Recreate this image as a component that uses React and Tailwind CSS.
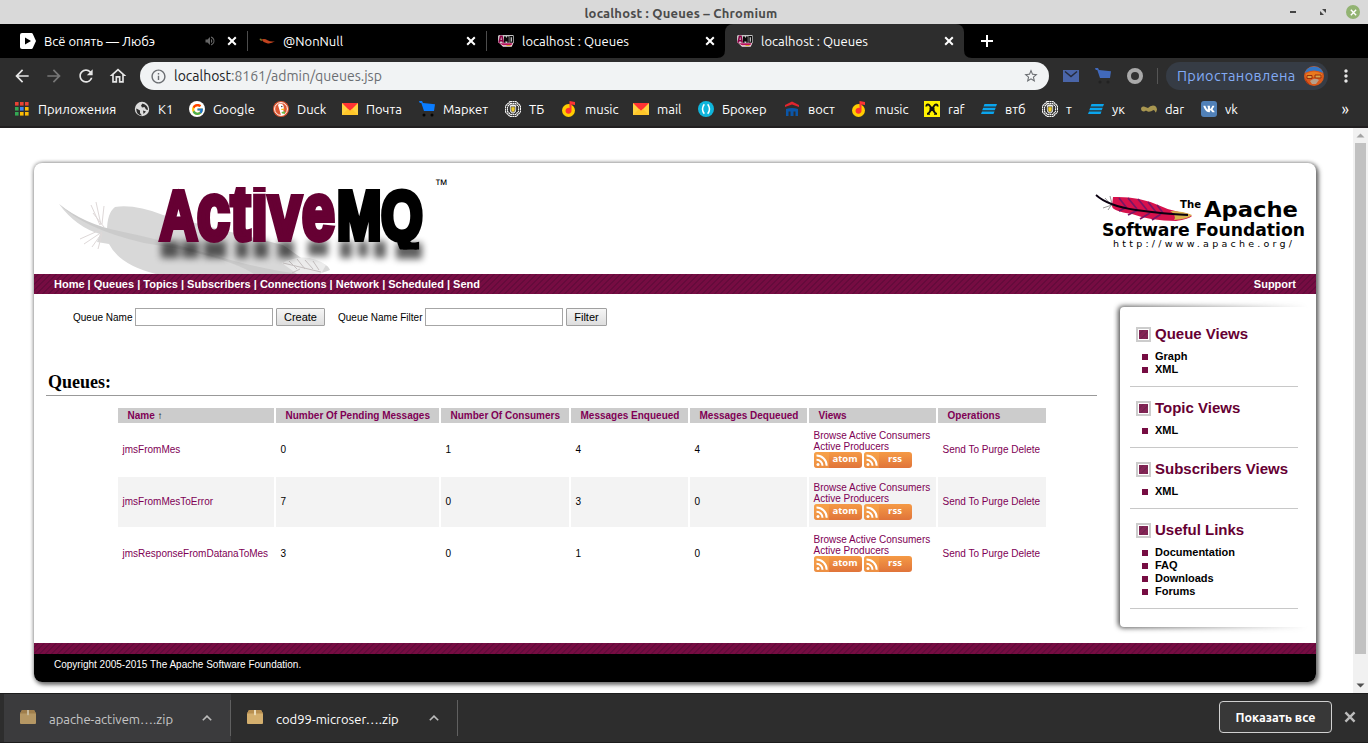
import React from "react";
import {
  MdArrowBack, MdArrowForward, MdRefresh, MdOutlineHome, MdInfoOutline, MdStarBorder,
  MdVolumeUp, MdMoreVert,
} from "react-icons/md";
import { FcGoogle } from "react-icons/fc";
import { FaVk } from "react-icons/fa";

const stripes =
  "bg-[repeating-linear-gradient(135deg,#760c42_0px,#760c42_2.2px,#5c0a38_3.1px,#760c42_4.243px)]";

function Cross({ className = "size-2.5" }) {
  return (
    <svg viewBox="0 0 10 10" className={className} fill="none" stroke="currentColor" strokeWidth="2">
      <path d="M1.2 1.2 8.8 8.8M8.8 1.2 1.2 8.8" />
    </svg>
  );
}

function AmqIcon() {
  return (
    <svg viewBox="0 0 16 16" className="size-4">
      <path d="M1 2h14l1 1v7H0V3z" fill="#c4c4c4" />
      <path d="M1 10 2.500 3.200h1.500L5.300 10M2 7.800h2.700" stroke="#8b0045" strokeWidth="1.600" fill="none" />
      <path d="M6.800 10V3.500l1.600 3.500L10 3.500V10" stroke="#0a0a0a" strokeWidth="1.600" fill="none" />
      <path d="M12 3.600h2.600v5.900H12zM13.500 9l1.700 1.500" stroke="#0a0a0a" strokeWidth="1.300" fill="none" />
      <path d="M1 9.800h14.500l-1.800 4H5z" fill="#f6e3e9" />
      <path d="M1.500 10.200h13l-1.200 2H5z" fill="#b5105a" />
      <path d="M9 12h4l-1 1H8z" fill="#e0a030" />
    </svg>
  );
}

function PlayTab() {
  return (
    <svg viewBox="0 0 16 16" className="size-4">
      <path d="M2 0h9.500q.8 0 1.200.8L16 8l-3.300 7.200q-.4.800-1.200.8H2q-2 0-2-2V2q0-2 2-2z" fill="#fff" />
      <path d="M5 4.500 11 8l-6 3.500z" fill="#000" />
    </svg>
  );
}

function Chili() {
  return (
    <svg viewBox="0 0 16 16" className="size-4">
      <path d="M2.500 6.500q3-1.500 6 .8 3 1.700 7.500 1-4 2.700-8 1.900Q4 9.500 2.500 6.500z" fill="#c2431f" />
      <path d="M.3 6 2 5.600l1.200 1.300-1 1.400z" fill="#7f7a2a" />
    </svg>
  );
}

function Tab({ icon, title, sound, active, divider }) {
  return (
    <div className={"relative flex h-full w-[239px] shrink-0 items-center pl-3 " + (active ? "rounded-t-lg bg-[#2d2d2d]" : "")}>
      {active && (
        <>
          <svg viewBox="0 0 8 8" className="absolute bottom-0 -left-2 size-2" fill="#2d2d2d"><path d="M8 0v8H0q8 0 8-8z" /></svg>
          <svg viewBox="0 0 8 8" className="absolute -right-2 bottom-0 size-2" fill="#2d2d2d"><path d="M0 0v8h8Q0 8 0 0z" /></svg>
        </>
      )}
      <span className="flex w-6 shrink-0">{icon}</span>
      <span className="flex-1 pt-0.5 text-[13px] whitespace-nowrap">{title}</span>
      {sound && <MdVolumeUp className="mr-[11px] size-3 text-[#666]" />}
      <Cross />
      <span className={"ml-[9px] h-5 w-px shrink-0 translate-x-px " + (divider ? "bg-[#4c4c4c]" : "")} />
    </div>
  );
}

function Mail() {
  return (
    <svg viewBox="0 0 16 16" className="size-4">
      <path d="M0 2h16v12H0z" fill="#ffd23f" />
      <path d="M0 2h16L8 10z" fill="#ff3333" />
      <path d="M0 14 6 8l2 2 2-2 6 6z" fill="#ffc629" />
    </svg>
  );
}

function Music() {
  return (
    <svg viewBox="0 0 16 16" className="size-4">
      <circle cx="7.500" cy="9.500" r="6.500" fill="#ffcc00" />
      <path d="M8.500 0 14 1v3l-3.500-.5v6A3 3 0 1 1 8.500 7z" fill="#ff3333" />
    </svg>
  );
}

function Cart({ body, wheel }) {
  return (
    <svg viewBox="0 0 16 16" className="size-4">
      <path d="M0 0h3l1 2 12 1.300L15 10H5L2.300 2H.8z" fill={body} />
      <circle cx="5" cy="14" r="1.500" fill={wheel} />
      <circle cx="13" cy="14" r="1.500" fill={wheel} />
    </svg>
  );
}

function Crest() {
  return (
    <svg viewBox="0 0 16 16" className="size-4">
      <path d="M5 .5h6L15.500 5v6L11 15.500H5L.5 11V5z" fill="#1a1a1a" stroke="#f4f4f4" strokeWidth="1.200" strokeDasharray="2 .4" />
      <path d="M5.500 2.500h5l3 3v5l-3 3h-5l-3-3v-5z" fill="none" stroke="#f4f4f4" strokeWidth="1.300" strokeDasharray="1.800 .4" />
      <path d="M4.800 4.500q3.200-1.800 6.400 0V9q0 2.500-3.200 3.500Q4.800 11.500 4.800 9z" fill="#eee" />
      <path d="M6 5.800h4V9q0 1.500-2 2.300Q6 10.500 6 9z" fill="#f2cf2b" stroke="#333" strokeWidth=".6" />
    </svg>
  );
}

function Vtb() {
  return (
    <svg viewBox="0 0 16 16" className="size-4" fill="#0aa5ee">
      <path d="M3.500 3H16l-1 2.500H2.500zM2.200 6.800h12.500l-1 2.500H1.200zM1 10.600h12.500l-1 2.500H0z" />
    </svg>
  );
}

const bookmarks = [
  ["Приложения", "w-[120px]",
    <svg viewBox="0 0 16 16" className="size-4">
      {["#ea4335", "#ea4335", "#ea4335", "#34a853", "#4285f4", "#fbbc05", "#34a853", "#fbbc05", "#fbbc05"].map((c, i) => (
        <rect key={i} x={1 + (i % 3) * 5} y={1 + Math.floor(i / 3) * 5} width="3.600" height="3.600" fill={c} />
      ))}
    </svg>],
  ["К1", "w-[55px]",
    <svg viewBox="0 0 16 16" className="size-4">
      <circle cx="8" cy="8" r="7.200" fill="#dcdcdc" />
      <path d="M2.500 7.500 6 9.500V12l2 2.500Q2.500 14 2.200 8zM8.500 2.500 7 4.500l1 2 2.500-.5 1.500 2.500 2 .5Q14 4 8.500 2.500zM9 9.500l3 1-2.500 2.500z" fill="#2d2d2d" />
    </svg>],
  ["Google", "w-[84px]",
    <span className="flex size-4 items-center justify-center rounded-full bg-white"><FcGoogle className="size-[13px]" /></span>],
  ["Duck", "w-[69px]",
    <svg viewBox="0 0 16 16" className="size-4">
      <circle cx="8" cy="8" r="8" fill="#de5833" />
      <circle cx="8" cy="8" r="6.400" fill="#de5833" stroke="#fff" strokeWidth="1" />
      <path d="M5 4q1-1.800 3.200-1.200 2.500.6 2.600 4.200l-.4 2 .6 5-3 .3Q6.500 9 5 4z" fill="#fff" />
      <path d="M8.300 7.800h3.500l-1 1.200H8.300z" fill="#fdb813" />
      <path d="m8.500 11 3.500-.8v2.600l-3-.3z" fill="#65bc46" />
      <circle cx="8.800" cy="5.500" r=".7" fill="#234" />
    </svg>],
  ["Почта", "w-[77px]", <Mail />],
  ["Маркет", "w-[86px]", <Cart body="#0a7cff" wheel="#050505" />],
  ["ТБ", "w-[56px]", <Crest />],
  ["music", "w-[72px]", <Music />],
  ["mail", "w-[65px]", <Mail />],
  ["Брокер", "w-[86px]",
    <svg viewBox="0 0 16 16" className="size-4">
      <circle cx="8" cy="8" r="8" fill="#0fb5dc" />
      <path d="M6.300 3.200q-3.600 4.800 0 9.600M9.700 3.200q3.600 4.800 0 9.600" fill="none" stroke="#fff" strokeWidth="1.500" />
    </svg>],
  ["вост", "w-[67px]",
    <svg viewBox="0 0 16 16" className="size-4">
      <path d="M8 0.500 15 4v2L8 3.500 1 6V4z" fill="#e0252f" />
      <path d="M2 8q6-2 12 0v7h-2.500v-4.500h-2V15h-3v-4.500h-2V15H2z" fill="#0b56a8" />
    </svg>],
  ["music", "w-[73px]", <Music />],
  ["raf", "w-[57px]",
    <svg viewBox="0 0 16 16" className="size-4">
      <path d="M0 0h16v16H0z" fill="#fff200" />
      <path d="M2.500 5.500q-.3-2 1.500-2 1 0 2 1.500L11.500 12.500M13.500 5.500q.3-2-1.500-2-1 0-2 1.500L4.500 12.500M3 12.800h3M10 12.800h3" fill="none" stroke="#111" strokeWidth="2" />
      <path d="M5.500 6.500h5v3.500h-5z" fill="#111" />
    </svg>],
  ["втб", "w-[61px]", <Vtb />],
  ["т", "w-[46px]", <Crest />],
  ["ук", "w-[53px]", <Vtb />],
  ["dar", "w-[60px]",
    <svg viewBox="0 0 16 16" className="size-4">
      <path d="M0 7.500q.5-2.500 3-2 2 .5 4 1.500 2-2.500 5-2.500 3.500 0 4 4-.5 2.500-1.500 3-.5-2.500-2-2.500-2.500 2-5 1.800Q6 10.500 5 9.500 3 11 1 10 0 9 0 7.500z" fill="#a89650" />
    </svg>],
  ["vk", "w-[50px]",
    <span className="flex size-4 items-center justify-center rounded-[3px] bg-[#5181b8]"><FaVk className="size-3 text-white" /></span>],
];

function Browser() {
  return (
    <div className="flex shrink-0 flex-col font-['Ubuntu','Noto_Sans',sans-serif] text-white">
      <div className="grid h-6 grid-cols-[1fr_auto_1fr] items-center bg-[#d9d9d9] pr-2 text-[#4b4b4b]">
        <span />
        <span className="pt-[3px] pl-0.5 text-[13px] leading-none font-semibold tracking-[0.200px]">localhost : Queues – Chromium</span>
        <span className="flex items-center justify-end">
          <span className="h-0.5 w-1.5 bg-[#444]" />
          <svg viewBox="0 0 6 6" className="ml-6 size-1.5" fill="#444"><path d="M2 0h4v4zM0 2l4 4H0z" /></svg>
          <span className="ml-5 flex size-3.5 items-center justify-center rounded-full bg-[#92b372] text-white"><Cross className="size-[7px]" /></span>
        </span>
      </div>
      <div className="flex h-[34px] items-center bg-black pl-2">
        <Tab icon={<PlayTab />} title="Всё опять — Любэ" sound divider />
        <Tab icon={<Chili />} title="@NonNull" divider />
        <Tab icon={<AmqIcon />} title="localhost : Queues" />
        <Tab icon={<AmqIcon />} title="localhost : Queues" active />
        <svg viewBox="0 0 12 12" className="ml-[17px] size-3" stroke="#fff" strokeWidth="2"><path d="M6 0v12M0 6h12" /></svg>
      </div>
      <div className="flex h-9 items-center bg-[#2d2d2d] text-[#e6e6e6]">
        <MdArrowBack className="ml-3 size-5" />
        <MdArrowForward className="ml-3 size-5 text-[#777]" />
        <MdRefresh className="ml-3 size-5" />
        <MdOutlineHome className="ml-3 size-5" />
        <div className="ml-3 flex h-7 w-[909px] items-center rounded-full bg-[#f1f3f4] pr-[10px] pl-[10px] text-[#6b6e72]">
          <MdInfoOutline className="size-[17px]" />
          <span className="ml-[7px] flex-1 text-[14px]"><span className="text-[#202124]">localhost</span>:8161/admin/queues.jsp</span>
          <MdStarBorder className="size-4" />
        </div>
        <svg viewBox="0 0 16 12" className="ml-3.5 h-3 w-4"><path d="M0 0h16v12H0z" fill="#4a65a8" /><path d="m2 1.500 6 5 6-5" fill="none" stroke="#262b3a" strokeWidth="1.500" /></svg>
        <span className="ml-4 flex"><Cart body="#4169bb" wheel="#222" /></span>
        <span className="ml-4 size-4 rounded-full border-4 border-[#a9a9a9] bg-[#333]" />
        <span className="ml-3.5 h-4 w-px bg-[#555]" />
        <div className="ml-2 flex h-7 w-[162px] items-center justify-between rounded-full bg-[#363c45] pr-1 pl-[11px] text-[#82abf5]">
          <span className="text-[14.500px] tracking-[0.350px]">Приостановлена</span>
          <svg viewBox="0 0 20 20" className="size-5 shrink-0">
            <circle cx="10" cy="10" r="10" fill="#d9591b" />
            <path d="M.6 7A10 10 0 0 1 19.400 7Q10 2 .6 7z" fill="#3476c4" />
            <path d="M2 8q8-5 16 0v3H2z" fill="#e87a1f" />
            <path d="M3 9.500h5v3H3zM11 9h6v3h-6z" fill="#d9a34a" stroke="#9a2f0d" />
            <path d="M6 15q5-4 9-1l-3 4H8z" fill="#b9a08a" />
            <path d="M1 12q3 6 6 7-5-1-6-7z" fill="#a8280c" />
          </svg>
        </div>
        <MdMoreVert className="ml-[8px] size-5" />
      </div>
      <div className="flex h-[34px] items-center border-b-2 border-[#211f20] bg-[#2d2d2d] pb-0.5 pl-3.5 text-[13px]">
        {bookmarks.map(([name, width, icon], i) => (
          <div key={i} className={"flex shrink-0 items-center whitespace-nowrap " + width}>
            <span className="flex w-6 shrink-0">{icon}</span>
            <span className="pt-0.5">{name}</span>
          </div>
        ))}
        <span className="mr-[19px] ml-auto pb-px text-[16px] leading-none">»</span>
      </div>
    </div>
  );
}

function ActiveMqLogo() {
  return (
    <svg viewBox="0 0 430 111" className="h-[111px] w-[430px]" fontFamily="Liberation Sans, Arial, sans-serif" fontWeight="700">
      <defs>
        <filter id="soft" x="-10%" y="-80%" width="120%" height="260%"><feGaussianBlur stdDeviation="3.500" /></filter>
        <clipPath id="caps"><path d="M115 24h290v62.500H115z" /></clipPath>
      </defs>
      <path d="M25 41q19 17 48 27 0-18 8-24 20-3 48 8l120 30 24 17q20-1 23 8-10 5-40 5H126q-40-9-51-31L63 79 66 71Q42 64 25 41z" fill="#d8d8d8" />
      <path d="M25 41q25 20 60 27t90 23 90 20h-45Q190 92 110 80 50 66 25 41z" fill="#cbcbcb" />
      <path d="M57 42l9 20M62 39l5 23M70 43l-2 18M59 50l11 14M50 81l18-12M46 76l20-9M58 84l10-14M64 86l4-15" stroke="#ded8d8" fill="none" />
      <path d="M248 100q24-12 44 2l-5 9h-24z" fill="#ececec" />
      <path d="M249 100l38 9M255 98l8 8M263 96l8 10M271 97l8 9M279 98l6 9M258 110l8-4" stroke="#c4bfbf" fill="none" />
      <path filter="url(#soft)" opacity=".62" d="M127 78h18v17h-18zM148 78h17v17h-17zM170 78h22v17h-22zM202 78h12v17h-12zM220 78h14v17h-14zM244 78h16v17h-16zM274 78h20v15h-20zM306 78h12v17h-12zM324 78h10v16h-10zM340 78h12v17h-12zM362 80h26v16h-26z" />
      <g clipPath="url(#caps)" strokeWidth="6">
        <text transform="translate(126 76) scale(.745 1)" fontSize="69" fill="#660033" stroke="#660033">A<tspan fontSize="79" letterSpacing="1.200">ctive</tspan></text>
        <text transform="translate(303 76) scale(.77 1)" fontSize="69" fill="#000" stroke="#000">MQ</text>
      </g>
      <text x="400.500" y="26" fontFamily="Liberation Sans, sans-serif" fontWeight="400" fontSize="14" textLength="13" lengthAdjust="spacingAndGlyphs">™</text>
    </svg>
  );
}

function ApacheLogo() {
  return (
    <svg viewBox="0 0 222 70" className="h-[70px] w-[222px]" fontFamily="DejaVu Sans, sans-serif" fontWeight="700">
      <path d="M11 4l7 8M16 2l2 8M9 14l9-3M14 16l4-6M12 7l6 4" stroke="#999" fill="none" />
      <path d="M19 3q25-1 45 8 10 5 21 7 10 1 13 4-3 3-16 5-25 0-44-7Q18 17 18 12z" fill="#d6114c" />
      <path d="M25 4l7 9M34 4l9 11M44 5l9 11M54 8l8 10M63 11l6 8M25 17l8-4M34 21l10-5M46 25l10-6M58 26l9-6" stroke="#7a1566" strokeWidth="1.700" fill="none" />
      <path d="M76 17q13 0 22 4-3 4-18 5 3-5-4-9z" fill="#d6b14c" />
      <path d="M2 1q12 11 40 15t52 5" fill="none" stroke="#0a0010" strokeWidth="1.800" />
      <text x="86" y="14" fontSize="11" textLength="21" lengthAdjust="spacingAndGlyphs">The</text>
      <text x="110" y="22.500" fontSize="22" textLength="94" lengthAdjust="spacingAndGlyphs">Apache</text>
      <text x="8" y="42" fontSize="17" textLength="203" lengthAdjust="spacingAndGlyphs">Software Foundation</text>
      <text x="19" y="52.500" fontSize="9.500" fontWeight="400" textLength="179">http://www.apache.org/</text>
    </svg>
  );
}

function Feed({ label }) {
  return (
    <span className="flex h-4 w-12 items-center rounded-[3px] bg-gradient-to-b from-[#f59a45] to-[#e0743a] text-white">
      <svg viewBox="0 0 16 16" className="size-4 shrink-0" fill="none" stroke="#fff" strokeWidth="2">
        <path d="M0 3q0-3 3-3h12v16H3q-3 0-3-3z" fill="#f9a94c" fillOpacity=".5" stroke="none" />
        <circle cx="4" cy="12.500" r="1.500" fill="#fff" stroke="none" />
        <path d="M2.500 7.700a6 6 0 0 1 6 6M2.500 3.500a10.200 10.200 0 0 1 10.200 10.200" />
      </svg>
      <span className="flex-1 pr-0.5 pb-0.5 text-center font-['Open_Sans',sans-serif] text-[9.500px] leading-none font-bold">{label}</span>
    </span>
  );
}

const rows = [
  ["jmsFromMes", "0", "1", "4", "4"],
  ["jmsFromMesToError", "7", "0", "3", "0"],
  ["jmsResponseFromDatanaToMes", "3", "0", "1", "0"],
];
const heads = ["Number Of Pending Messages", "Number Of Consumers", "Messages Enqueued", "Messages Dequeued", "Views", "Operations"];
const cols = "grid grid-cols-[156px_163px_128px_117px_117px_127px_108px] gap-x-0.5";

function QueueTable() {
  return (
    <div className="mt-3 ml-[84px] flex w-[928px] flex-col gap-0.5 text-[10px]">
      <div className={cols + " h-[15px] leading-[15px] font-bold text-[#800055]"}>
        <span className="bg-[#ccc] pl-[9.500px]">Name <span className="font-normal text-black">↑</span></span>
        {heads.map((h) => <span key={h} className="bg-[#ccc] pl-[9.500px] whitespace-nowrap">{h}</span>)}
      </div>
      {rows.map((r, i) => {
        const cell = "flex items-center pb-0.5 pl-[4.500px] whitespace-nowrap " + (i === 1 ? "bg-[#f3f3f3]" : "");
        return (
          <div key={r[0]} className={cols + " h-[50px]"}>
            {r.map((v, j) => <span key={j} className={cell + (j === 0 ? " text-[#800055]" : "")}>{v}</span>)}
            <div className={cell + " text-[#800055]"}>
              <div className="leading-[11px]">
                Browse Active Consumers<br />Active Producers
                <div className="flex gap-0.5 pl-[0.500px]"><Feed label="atom" /><Feed label="rss" /></div>
              </div>
            </div>
            <span className={cell + " text-[#800055]"}>Send To Purge Delete</span>
          </div>
        );
      })}
    </div>
  );
}

const sections = [
  ["Queue Views", ["Graph", "XML"]],
  ["Topic Views", ["XML"]],
  ["Subscribers Views", ["XML"]],
  ["Useful Links", ["Documentation", "FAQ", "Downloads", "Forums"]],
];

function Sidebar() {
  return (
    <aside className="relative mt-[13px] ml-[23px] h-[320px] w-[188px] px-[10px] pt-[6px]">
      <div className="pointer-events-none absolute -inset-[7px] p-[7px] [mask-image:linear-gradient(to_right,black_5%,transparent_97%)]">
        <div className="size-full rounded-[4px] bg-white shadow-[-1px_0_5px_1px_#555]" />
      </div>
      {sections.map(([title, items]) => (
        <section key={title} className="relative flex w-[168px] flex-col border-b border-[#c8c8c8] pb-[10px] not-first:pt-3 first:pt-2">
          <h2 className="flex h-[18px] items-center gap-1 pl-1.5 text-[15px] font-bold whitespace-nowrap text-[#660033]">
            <span className="flex size-[15px] shrink-0 border-2 border-[#ccc] p-px"><span className={"size-full opacity-90 " + stripes} /></span>
            {title}
          </h2>
          <ul className="mt-[7px]">
            {items.map((t) => (
              <li key={t} className="flex h-[13px] items-center gap-[7px] pl-3 text-[11px] leading-[13px] font-bold text-black">
                <span className="mt-px size-1.5 bg-[#760c42]" />{t}
              </li>
            ))}
          </ul>
        </section>
      ))}
    </aside>
  );
}

function Field({ label, action, className, button }) {
  return (
    <div className={"flex items-center " + className}>
      <label className="mr-[3px]">{label}</label>
      <input className="mr-[3px] h-[18px] w-[138px] border border-[#a6a6a6] bg-white" />
      <button className={"h-[18px] rounded-[1px] border border-[#a0a0a0] bg-gradient-to-b from-[#f6f6f6] to-[#dedede] pr-px text-[11px] leading-none " + button}>{action}</button>
    </div>
  );
}

function Page() {
  return (
    <div className="flex-1 bg-white pt-[35px] pl-[34px] font-['Liberation_Sans',Arial,sans-serif]">
      <div className="flex h-[519px] w-[1282px] flex-col overflow-visible rounded-lg bg-white shadow-[0_0_4px_0_#888,2px_2px_5px_0_#444]">
        <header className="flex h-[111px] justify-between">
          <ActiveMqLogo />
          <div className="mt-[31px]"><ApacheLogo /></div>
        </header>
        <nav className={"flex h-5 items-center justify-between px-5 text-[11px] font-bold text-white " + stripes}>
          <span>Home | Queues | Topics | Subscribers | Connections | Network | Scheduled | Send</span>
          <span>Support</span>
        </nav>
        <div className="flex h-[349px]">
          <main className="w-[1063px] shrink-0">
            <div className="mt-3.5 flex pl-[39px] text-[10px]">
              <Field label="Queue Name" action="Create" className="w-[265px]" button="w-[49px]" />
              <Field label="Queue Name Filter" action="Filter" className="" button="w-[41px]" />
            </div>
            <h1 className="mt-[43px] ml-3 h-[27px] border-b border-[#999] pl-0.5 font-['Liberation_Serif',serif] text-[18px] leading-[26px] font-bold">Queues:</h1>
            <QueueTable />
          </main>
          <Sidebar />
        </div>
        <div className={"h-[11px] " + stripes} />
        <footer className="h-7 rounded-b-lg bg-black pt-[5px] pl-5 text-[10px] leading-[11px] text-white">Copyright 2005-2015 The Apache Software Foundation.</footer>
      </div>
    </div>
  );
}

function Box() {
  return (
    <svg viewBox="0 0 16 14" className="mb-0.5 h-3.5 w-4">
      <path d="M2 0h12l2 3.500V13q0 1-1 1H1q-1 0-1-1V3.500z" fill="#d4af6e" />
      <path d="M2 0h12l2 3.500H0z" fill="#b88f50" />
      <path d="M7 0h2v5.500l-1-.8-1 .8z" fill="#ecdcb8" />
    </svg>
  );
}

function Download({ name, className, faded }) {
  return (
    <div className={"flex h-full w-[227px] items-center pl-4 " + className}>
      <span className={faded ? "opacity-80" : ""}><Box /></span>
      <span className="ml-[13px] w-[153px] pt-[3px] text-[13px]">{name}</span>
      <svg viewBox="0 0 10 6" className="h-1.5 w-2.5" fill="none" stroke="#bbb" strokeWidth="1.600"><path d="m.8 5.300 4.200-4.200 4.200 4.200" /></svg>
      <span className="ml-auto h-9 w-px bg-[#606060]" />
    </div>
  );
}

export default function App() {
  return (
    <div className="flex h-[743px] w-[1368px] flex-col overflow-hidden bg-white">
      <Browser />
      <div className="flex h-[565px] shrink-0 overflow-hidden">
        <Page />
        <div className="flex w-[15px] flex-col items-center justify-between bg-[#f1f1f1]">
          <svg viewBox="0 0 15 15" className="size-[15px]"><path d="M3.500 9.500h8l-4-4z" fill="#a3a3a3" /></svg>
          <div className="mb-[24px] h-[511px] w-[11px] bg-[#c1c1c1]" />
          <svg viewBox="0 0 15 15" className="size-[15px]"><path d="M3.500 5.500h8l-4 4z" fill="#505050" /></svg>
        </div>
      </div>
      <div className="flex h-[50px] shrink-0 items-center border-y border-[#1d1d1d] bg-[#2d2d2d] pl-1 font-['Ubuntu','Noto_Sans',sans-serif]">
        <Download name="apache-activem….zip" className="bg-[#3b3b3d] text-[#c6c6c6]" faded />
        <Download name="cod99-microser….zip" className="text-white" />
        <div className="mb-0.5 ml-auto flex h-8 w-[113px] items-center justify-center rounded border border-[#d0d0d0] bg-[#383838] text-[12.500px] font-semibold text-white">Показать все</div>
        <Cross className="mr-3 mb-0.5 ml-3 size-3 text-[#bbb]" />
      </div>
    </div>
  );
}
